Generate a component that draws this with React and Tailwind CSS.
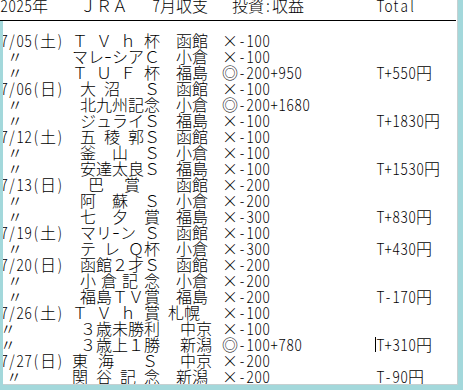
import React from "react";

const FULL = "inline-block shrink-0 w-[16px] text-center";
const HALF = "inline-block shrink-0 w-[8px] text-center scale-x-[0.85]";

function isHalf(ch) {
  const c = ch.charCodeAt(0);
  return c < 0x7f || (c >= 0xff61 && c <= 0xff9f);
}

function Txt({ t }) {
  return Array.from(t).map((ch, i) => (
    <span key={i} className={isHalf(ch) ? HALF : FULL}>
      {ch === " " ? "\u00a0" : ch}
    </span>
  ));
}

function Parts({ items }) {
  return items.map((it, i) =>
    typeof it === "number" ? (
      <span key={i} className="inline-block shrink-0" style={{ width: it }} />
    ) : (
      <Txt key={i} t={it} />
    )
  );
}

const rows = [
  { d: "7/05(土)", n: ["Ｔ Ｖ ｈ 杯  函館"], b: "×-100" },
  { d: 7, n: ["マレｰシアＣ  小倉"], b: "×-100" },
  { d: 7, n: ["Ｔ Ｕ Ｆ 杯  福島"], b: "◎-200+950", t: "T+550円" },
  { d: "7/06(日)", n: [" 大 沼   Ｓ  函館"], b: "×-100" },
  { d: 7, n: [" 北九州記念  小倉"], b: "◎-200+1680" },
  { d: 7, n: [" ジュライＳ  福島"], b: "×-100", t: "T+1830円" },
  { d: "7/12(土)", n: [" 五 稜 郭Ｓ  函館"], b: "×-100" },
  { d: 7, n: [" 釜  山  Ｓ  小倉"], b: "×-100" },
  { d: 7, n: [" 安達太良Ｓ  福島"], b: "×-100", t: "T+1530円" },
  { d: "7/13(日)", n: [16, "巴", 20, "賞", 36, "函館"], b: "×-200" },
  { d: 7, n: [" 阿  蘇  Ｓ  小倉"], b: "×-200" },
  { d: 7, n: [" 七  夕  賞  福島"], b: "×-300", t: "T+830円" },
  { d: "7/19(土)", n: [" マリｰン Ｓ  函館"], b: "×-100" },
  { d: 7, n: [" テ レ Ｑ杯  小倉"], b: "×-300", t: "T+430円" },
  { d: "7/20(日)", n: [" 函館２才Ｓ  函館"], b: "×-200" },
  { d: 7, n: [8, "小", 5, "倉", 5, "記", 6, "念", 16, "小倉"], b: "×-200" },
  { d: 7, n: [" 福島ＴＶ賞  福島"], b: "×-200", t: "T-170円" },
  { d: "7/26(土)", n: ["Ｔ Ｖ ｈ 賞 札幌"], b: "×-100" },
  { d: 0, n: [8, "３歳未勝利", 20, "中京"], b: "×-100" },
  { d: 0, n: [8, "３歳上１勝", 20, "新潟"], b: "◎-100+780", t: "T+310円", caret: true },
  { d: "7/27(日)", n: ["東", 10, "海", 28, "Ｓ", 22, "中京"], b: "×-200" },
  { d: 6, n: ["関 谷 記 念  新潟"], b: "×-200", t: "T-90円" },
];

export default function App() {
  return (
    <div className="relative w-[463px] h-[390px] overflow-hidden bg-[#a3d8db] text-black font-['Noto_Sans_CJK_JP',sans-serif] font-light text-[16px] leading-[16px]">
      <div className="flex flex-col w-[458px] h-[385px] bg-white border-r border-b border-[#c6d0d1] overflow-hidden">
        {/* header */}
        <div className="flex h-[16px] mt-[-3px] shrink-0">
          <div className="flex w-[80px] shrink-0"><Txt t="2025年" /></div>
          <div className="flex w-[72px] shrink-0"><Txt t="ＪＲＡ" /></div>
          <div className="flex w-[80px] shrink-0"><Txt t="7月収支" /></div>
          <div className="flex w-[144px] shrink-0"><Txt t="投資:収益" /></div>
          <div className="flex"><Txt t="Total" /></div>
        </div>
        <div className="mt-[7px] h-px w-[456px] bg-black shrink-0" />
        {/* rows */}
        <div className="flex flex-col mt-[11px]">
          {rows.map((r, i) => (
            <div key={i} className="flex h-[16px] shrink-0">
              <div className="flex w-[72px] shrink-0">
                {typeof r.d === "number" ? (
                  <span className={FULL} style={{ marginLeft: r.d }}>〃</span>
                ) : (
                  <Txt t={r.d} />
                )}
              </div>
              <div className="flex w-[150px] shrink-0">
                <Parts items={r.n} />
              </div>
              <div className="flex w-[154px] shrink-0">
                <Txt t={r.b} />
              </div>
              <div className="relative flex">
                {r.caret && (
                  <span className="absolute left-[-1px] top-[1px] h-[15px] w-px bg-black" />
                )}
                {r.t && <Txt t={r.t} />}
              </div>
            </div>
          ))}
        </div>
      </div>
      <div className="absolute left-0 top-[21px] bottom-0 w-[3px] bg-[#a3d8db]" />
    </div>
  );
}
